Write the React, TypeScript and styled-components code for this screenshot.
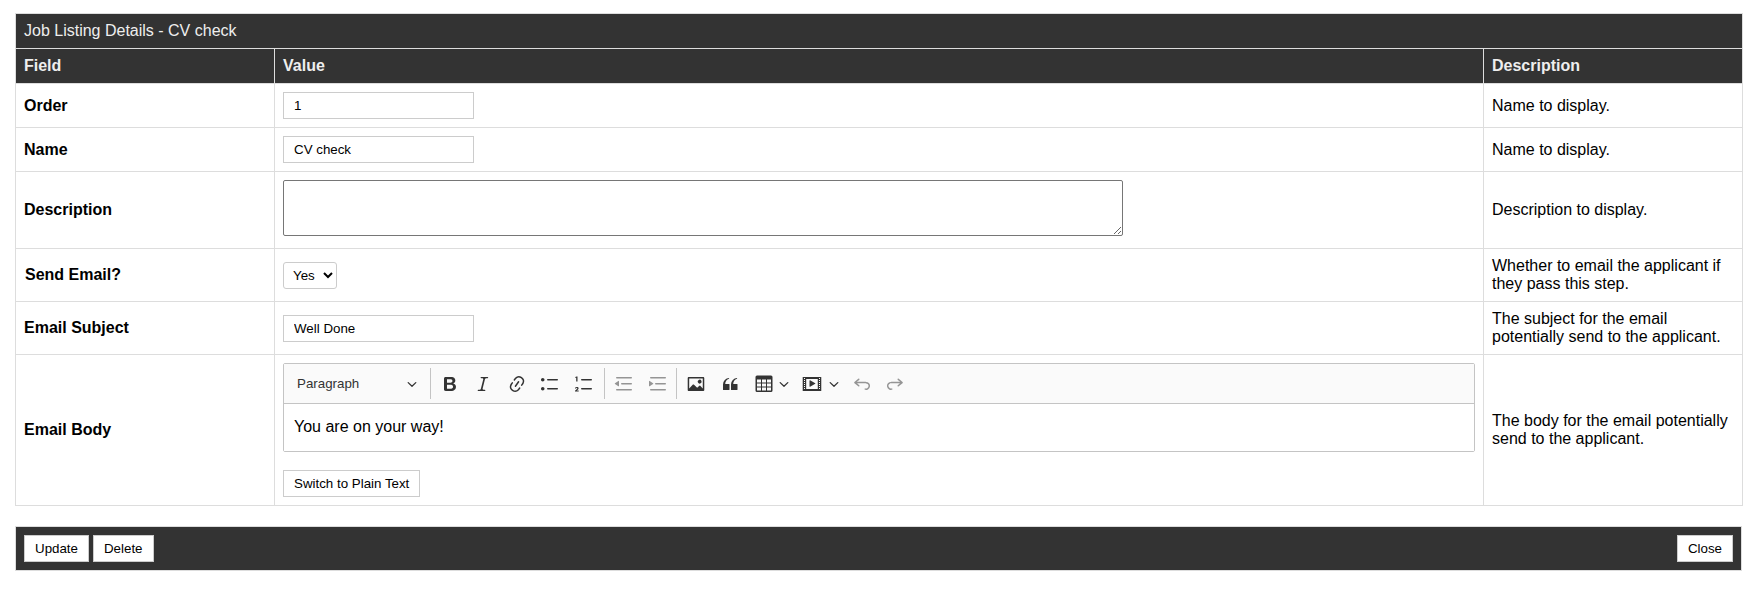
import React from 'react';
import styled, { createGlobalStyle } from 'styled-components';

const GlobalStyle = createGlobalStyle`
  body {
    margin: 0;
    background: #fff;
    color: #000;
    font-family: "Liberation Sans", Arial, sans-serif;
    font-size: 16px;
    line-height: 18px;
  }
`;

const Page = styled.div`
  box-sizing: border-box;
  width: 1762px;
  padding: 13px 20px 0 15px;
`;

const DetailsTable = styled.table`
  width: 1727px;
  table-layout: fixed;
  border-collapse: collapse;
  border: 1px solid #ddd;
`;

const TitleCell = styled.th`
  padding: 8px;
  background: #333;
  color: #eee;
  font-weight: normal;
  text-align: left;
  border: 1px solid #ddd;
`;

const HeadCell = styled.th`
  padding: 8px;
  background: #333;
  color: #eee;
  font-weight: bold;
  text-align: left;
  border: 1px solid #ddd;
`;

const FieldCell = styled.td<{ $nudge?: boolean }>`
  padding: 8px;
  padding-left: ${(p) => (p.$nudge ? '9px' : '8px')};
  font-weight: bold;
  border: 1px solid #ddd;
`;

const Cell = styled.td`
  padding: 8px;
  border: 1px solid #ddd;
`;

const ValueCell = styled(Cell)`
  line-height: 18px;
`;

const TextInput = styled.input`
  display: block;
  box-sizing: border-box;
  width: 191px;
  height: 27px;
  padding: 0 10px;
  border: 1px solid #ccc;
  border-radius: 0;
  background: #fff;
  color: #000;
  font-family: inherit;
  font-size: 13.333px;
`;

const TextArea = styled.textarea`
  box-sizing: border-box;
  width: 840px;
  height: 56px;
  margin: 0;
  padding: 2px;
  border: 1px solid #767676;
  border-radius: 2px;
  background: #fff;
  font-family: inherit;
`;

const Select = styled.select`
  display: block;
  box-sizing: border-box;
  width: 54px;
  height: 27px;
  padding: 0 4px 0 5px;
  border: 1px solid #ccc;
  border-radius: 3px;
  background: #fff;
  color: #000;
  font-family: inherit;
  font-size: 13.333px;
`;

const Editor = styled.div`
  margin-bottom: 18px;
  border: 1px solid #c4c4c4;
  border-radius: 2px;
`;

const Toolbar = styled.div`
  display: flex;
  align-items: center;
  height: 39px;
  background: #fafafa;
  border-bottom: 1px solid #c4c4c4;
`;

const HeadingDropdown = styled.div`
  display: flex;
  align-items: center;
  justify-content: space-between;
  box-sizing: border-box;
  width: 146px;
  padding: 0 13px;
  color: #333;
  font-size: 13.333px;
`;

const Separator = styled.span<{ $before?: number; $after?: number }>`
  flex: none;
  width: 1px;
  height: 31px;
  margin-left: ${(p) => p.$before ?? 0}px;
  margin-right: ${(p) => p.$after ?? 0}px;
  background: #c4c4c4;
`;

const ToolButton = styled.span<{ $off?: boolean; $width?: number; $gap?: number }>`
  display: flex;
  align-items: center;
  justify-content: center;
  gap: ${(p) => p.$gap ?? 0}px;
  flex: none;
  width: ${(p) => p.$width ?? 33.5}px;
  color: #333;
  opacity: ${(p) => (p.$off ? 0.5 : 1)};
`;

const IconSvg = styled.svg`
  display: block;
  flex: none;
  fill: currentColor;
  fill-rule: evenodd;
`;

const ChevronSvg = styled.svg`
  display: block;
  flex: none;
  fill: none;
  stroke: currentColor;
  stroke-width: 1.3;
  stroke-linecap: round;
  stroke-linejoin: round;
`;

const EditorBody = styled.div`
  padding: 14px 10px 15px;
  background: #fff;
`;

const Button = styled.button`
  display: block;
  box-sizing: border-box;
  height: 27px;
  padding: 0 10px;
  border: 1px solid #ccc;
  border-radius: 0;
  background: #fff;
  color: #000;
  font-family: inherit;
  font-size: 13.333px;
`;

const Footer = styled.div`
  display: flex;
  justify-content: space-between;
  box-sizing: border-box;
  width: 1727px;
  margin-top: 20px;
  padding: 8px;
  background: #333;
  border: 1px solid #ddd;
`;

const ButtonGroup = styled.div`
  display: flex;
  gap: 4px;
`;

const Icon: React.FC<{ d: string }> = ({ d }) => (
  <IconSvg width={20} height={20} viewBox="0 0 20 20">
    <path d={d} />
  </IconSvg>
);

const Chevron: React.FC = () => (
  <ChevronSvg width={10} height={10} viewBox="0 0 10 10">
    <path d="M1.2 3.6 5 7.2l3.8-3.6" />
  </ChevronSvg>
);

const bold = 'M10.187 17H5.773c-.637 0-1.092-.138-1.364-.415-.273-.277-.409-.718-.409-1.323V4.738c0-.617.14-1.062.419-1.332.279-.27.73-.406 1.354-.406h4.68c.69 0 1.288.041 1.793.124.506.083.96.242 1.36.478.341.197.644.447.906.75a3.262 3.262 0 0 1 .808 2.162c0 1.401-.722 2.426-2.167 3.075C15.05 10.175 16 11.315 16 13.01a3.756 3.756 0 0 1-2.296 3.504 6.1 6.1 0 0 1-1.517.377c-.571.073-1.238.11-2 .11zm-.217-6.217H7v4.087h3.069c1.977 0 2.965-.69 2.965-2.072 0-.707-.256-1.22-.768-1.537-.512-.319-1.277-.478-2.296-.478zM7 5.13v3.619h2.606c.729 0 1.292-.067 1.69-.2a1.6 1.6 0 0 0 .91-.765c.165-.267.247-.566.247-.897 0-.707-.26-1.176-.778-1.409-.519-.232-1.31-.348-2.375-.348H7z';
const italic = 'm9.586 14.633.021.004c-.036.335.095.655.393.962.082.083.173.15.274.201h1.474a.6.6 0 1 1 0 1.2H5.304a.6.6 0 0 1 0-1.2h1.15c.474-.07.809-.182 1.005-.334.157-.122.291-.32.404-.597l2.416-9.55a1.053 1.053 0 0 0-.281-.823 1.12 1.12 0 0 0-.442-.296H8.15a.6.6 0 0 1 0-1.2h6.443a.6.6 0 1 1 0 1.2h-1.195c-.376.056-.65.155-.823.296-.215.175-.423.439-.623.79l-2.366 9.347z';
const link = 'm11.077 15 .991-1.416a.75.75 0 1 1 1.229.86l-1.148 1.64a.748.748 0 0 1-.217.206 5.251 5.251 0 0 1-8.503-5.955.741.741 0 0 1 .12-.274l1.147-1.639a.75.75 0 1 1 1.228.86L4.933 10.7l.006.003a3.75 3.75 0 0 0 6.132 4.294l.006.004zm5.494-5.335a.748.748 0 0 1-.12.274l-1.147 1.639a.75.75 0 1 1-1.228-.86l.86-1.23a3.75 3.75 0 0 0-6.144-4.301l-.86 1.229a.75.75 0 0 1-1.229-.86l1.148-1.64a.748.748 0 0 1 .217-.206 5.251 5.251 0 0 1 8.503 5.955zm-4.563-2.532a.75.75 0 0 1 .184 1.045l-3.155 4.505a.75.75 0 1 1-1.229-.86l3.155-4.506a.75.75 0 0 1 1.045-.184z';
const bullets = 'M7 5.75c0 .414.336.75.75.75h9.5a.75.75 0 1 0 0-1.5h-9.5a.75.75 0 0 0-.75.75zm-6 0C1 4.784 1.777 4 2.75 4c.966 0 1.75.777 1.75 1.75 0 .966-.777 1.75-1.75 1.75C1.784 7.5 1 6.723 1 5.75zm6 9c0 .414.336.75.75.75h9.5a.75.75 0 1 0 0-1.5h-9.5a.75.75 0 0 0-.75.75zm-6 0c0-.966.777-1.75 1.75-1.75.966 0 1.75.777 1.75 1.75 0 .966-.777 1.75-1.75 1.75-.966 0-1.75-.777-1.75-1.75z';
const numbers = 'M7 5.75c0 .414.336.75.75.75h9.5a.75.75 0 1 0 0-1.5h-9.5a.75.75 0 0 0-.75.75zm0 9c0 .414.336.75.75.75h9.5a.75.75 0 1 0 0-1.5h-9.5a.75.75 0 0 0-.75.75zM3.5 2.6v5H2.2V3.7H1.2v-.8c.7 0 1.1-.1 1.3-.3h1zM1 17.6v-.9l1.9-1.7c.3-.3.4-.5.4-.7 0-.3-.2-.5-.5-.5-.4 0-.6.2-.6.6H1c0-1 .7-1.5 1.8-1.5s1.8.5 1.8 1.4c0 .5-.2.9-.8 1.4l-1 .9h1.9v1H1z';
const outdent = 'M2 3.75c0 .414.336.75.75.75h14.5a.75.75 0 1 0 0-1.5H2.75a.75.75 0 0 0-.75.75zm5 6c0 .414.336.75.75.75h9.5a.75.75 0 1 0 0-1.5h-9.5a.75.75 0 0 0-.75.75zM2.75 16.5h14.5a.75.75 0 1 0 0-1.5H2.75a.75.75 0 1 0 0 1.5zM4.368 6.95.98 9.358a.4.4 0 0 0 .013.661l3.39 2.207A.4.4 0 0 0 5 11.892V7.275a.4.4 0 0 0-.632-.326z';
const indent = 'M2 3.75c0 .414.336.75.75.75h14.5a.75.75 0 1 0 0-1.5H2.75a.75.75 0 0 0-.75.75zm5 6c0 .414.336.75.75.75h9.5a.75.75 0 1 0 0-1.5h-9.5a.75.75 0 0 0-.75.75zM2.75 16.5h14.5a.75.75 0 1 0 0-1.5H2.75a.75.75 0 1 0 0 1.5zM1.632 6.95 5.02 9.358a.4.4 0 0 1-.013.661l-3.39 2.207A.4.4 0 0 1 1 11.892V7.275a.4.4 0 0 1 .632-.326z';
const image = 'M6.91 10.54c.26-.23.64-.21.88.03l3.36 3.14 2.23-2.06a.64.64 0 0 1 .87 0l2.52 2.97V4.5H3.2v10.12l3.71-4.08zm10.27-7.51c.6 0 1.09.47 1.09 1.05v11.84c0 .59-.49 1.06-1.09 1.06H2.79c-.6 0-1.09-.47-1.09-1.06V4.08c0-.58.49-1.05 1.1-1.05h14.38zm-5.22 5.56a1.96 1.96 0 1 1 3.4-1.96 1.96 1.96 0 0 1-3.4 1.96z';
const quote = 'M3 10.423a6.5 6.5 0 0 1 6.056-6.408l.038.67C6.448 5.423 5.354 7.663 5.22 10H9c.552 0 .5.432.5.986v4.511c0 .554-.448.503-1 .503h-5c-.552 0-.5-.449-.5-1.003v-4.574zm8 0a6.5 6.5 0 0 1 6.056-6.408l.038.67c-2.646.739-3.74 2.979-3.873 5.315H17c.552 0 .5.432.5.986v4.511c0 .554-.448.503-1 .503h-5c-.552 0-.5-.449-.5-1.003v-4.574z';
const table = 'M3 1.5h14A1.5 1.5 0 0 1 18.5 3v13.5A1.5 1.5 0 0 1 17 18H3a1.5 1.5 0 0 1-1.5-1.5V3A1.5 1.5 0 0 1 3 1.5zM3 5.5v3h4v-3H3zm5 0v3h4v-3H8zm5 0v3h4v-3h-4zM3 9.5v3h4v-3H3zm5 0v3h4v-3H8zm5 0v3h4v-3h-4zM3 13.5v3h4v-3H3zm5 0v3h4v-3H8zm5 0v3h4v-3h-4z';
const media = 'M18.68 3.03c.6 0 .59-.03.59.55v12.84c0 .59.01.56-.59.56H1.29c-.6 0-.59.03-.59-.56V3.58c0-.58-.01-.55.6-.55h17.38zM15.77 15V5H4.2v10h11.57zM2 4v1h1V4H2zm0 2v1h1V6H2zm0 2v1h1V8H2zm0 2v1h1v-1H2zm0 2v1h1v-1H2zm0 2v1h1v-1H2zm15-10v1h1V4h-1zm0 2v1h1V6h-1zm0 2v1h1V8h-1zm0 2v1h1v-1h-1zm0 2v1h1v-1h-1zm0 2v1h1v-1h-1zM7.5 6.677a.4.4 0 0 1 .593-.351l5.133 2.824a.4.4 0 0 1 0 .7l-5.133 2.824a.4.4 0 0 1-.593-.35V6.676z';
const undo = 'm5.042 9.367 2.189 1.837a.75.75 0 0 1-.965 1.149l-3.788-3.18a.747.747 0 0 1-.21-.284.75.75 0 0 1 .17-.945L6.23 4.762a.75.75 0 1 1 .964 1.15L4.863 7.866h8.917A.75.75 0 0 1 14 7.9a4 4 0 1 1-1.477 7.718l.344-1.489a2.5 2.5 0 1 0 1.094-4.73l.008-.032H5.042z';
const redo = 'm14.958 9.367-2.189 1.837a.75.75 0 0 0 .965 1.149l3.788-3.18a.747.747 0 0 0 .21-.284.75.75 0 0 0-.17-.945L13.77 4.762a.75.75 0 1 0-.964 1.15l2.331 1.955H6.22A.75.75 0 0 0 6 7.9a4 4 0 1 0 1.477 7.718l-.344-1.489A2.5 2.5 0 1 1 5.039 9.4l-.008-.032h9.927z';

const EmailToolbar: React.FC = () => (
  <Toolbar>
    <HeadingDropdown>
      Paragraph
      <Chevron />
    </HeadingDropdown>
    <Separator $after={2} />
    <ToolButton><Icon d={bold} /></ToolButton>
    <ToolButton><Icon d={italic} /></ToolButton>
    <ToolButton><Icon d={link} /></ToolButton>
    <ToolButton><Icon d={bullets} /></ToolButton>
    <ToolButton><Icon d={numbers} /></ToolButton>
    <Separator $before={3} $after={3} />
    <ToolButton $off><Icon d={outdent} /></ToolButton>
    <ToolButton $off><Icon d={indent} /></ToolButton>
    <Separator $before={1} $after={3} />
    <ToolButton><Icon d={image} /></ToolButton>
    <ToolButton><Icon d={quote} /></ToolButton>
    <ToolButton $width={49} $gap={5}><Icon d={table} /><Chevron /></ToolButton>
    <ToolButton $width={50} $gap={7}><Icon d={media} /><Chevron /></ToolButton>
    <ToolButton $off $width={32.5}><Icon d={undo} /></ToolButton>
    <ToolButton $off><Icon d={redo} /></ToolButton>
  </Toolbar>
);

const App: React.FC = () => {
  return (
    <Page>
      <GlobalStyle />
      <DetailsTable>
        <colgroup>
          <col style={{ width: 259 }} />
          <col style={{ width: 1209 }} />
          <col style={{ width: 259 }} />
        </colgroup>
        <thead>
          <tr>
            <TitleCell colSpan={3}>Job Listing Details - CV check</TitleCell>
          </tr>
          <tr>
            <HeadCell>Field</HeadCell>
            <HeadCell>Value</HeadCell>
            <HeadCell>Description</HeadCell>
          </tr>
        </thead>
        <tbody>
          <tr>
            <FieldCell>Order</FieldCell>
            <ValueCell><TextInput defaultValue="1" /></ValueCell>
            <Cell>Name to display.</Cell>
          </tr>
          <tr>
            <FieldCell>Name</FieldCell>
            <ValueCell><TextInput defaultValue="CV check" /></ValueCell>
            <Cell>Name to display.</Cell>
          </tr>
          <tr>
            <FieldCell>Description</FieldCell>
            <ValueCell><TextArea /></ValueCell>
            <Cell>Description to display.</Cell>
          </tr>
          <tr>
            <FieldCell $nudge>Send Email?</FieldCell>
            <ValueCell>
              <Select defaultValue="Yes">
                <option>Yes</option>
                <option>No</option>
              </Select>
            </ValueCell>
            <Cell>Whether to email the applicant if they pass this step.</Cell>
          </tr>
          <tr>
            <FieldCell>Email Subject</FieldCell>
            <ValueCell><TextInput defaultValue="Well Done" /></ValueCell>
            <Cell>The subject for the email potentially send to the applicant.</Cell>
          </tr>
          <tr>
            <FieldCell>Email Body</FieldCell>
            <ValueCell>
              <Editor>
                <EmailToolbar />
                <EditorBody>You are on your way!</EditorBody>
              </Editor>
              <Button>Switch to Plain Text</Button>
            </ValueCell>
            <Cell>The body for the email potentially send to the applicant.</Cell>
          </tr>
        </tbody>
      </DetailsTable>
      <Footer>
        <ButtonGroup>
          <Button>Update</Button>
          <Button>Delete</Button>
        </ButtonGroup>
        <Button>Close</Button>
      </Footer>
    </Page>
  );
};

export default App;
